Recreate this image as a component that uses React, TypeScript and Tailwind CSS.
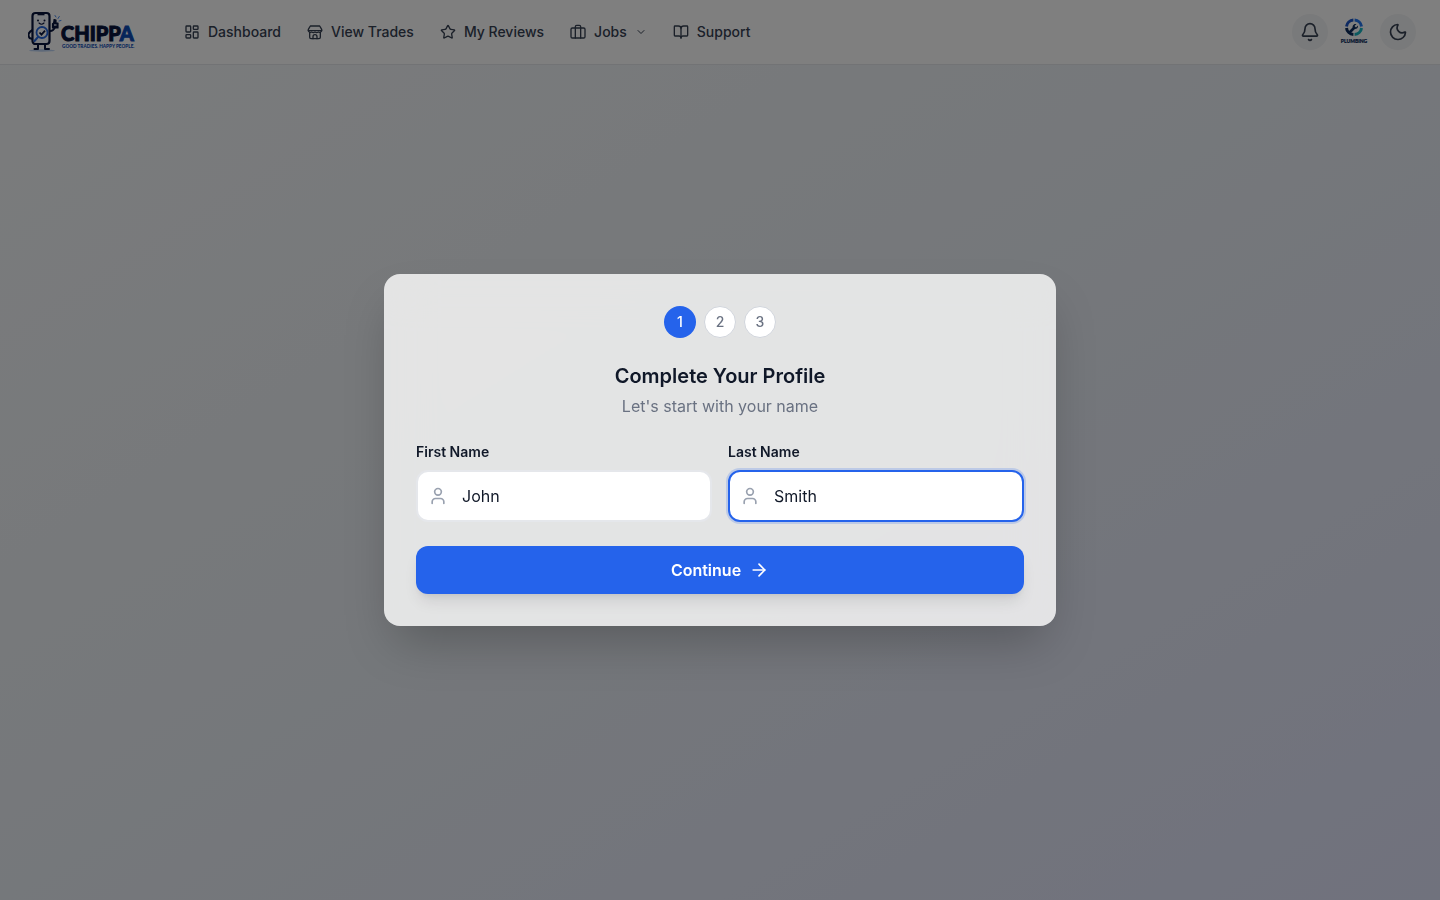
import React, { useState } from "react";
import {
  ArrowRight,
  Bell,
  BookOpen,
  ChevronDown,
  LayoutDashboard,
  Moon,
  Star,
  User,
} from "lucide-react";

type IconProps = { size?: number };

const StoreIcon: React.FC<IconProps> = ({ size = 16 }) => (
  <svg width={size} height={size} viewBox="0 0 24 24" fill="none" stroke="currentColor" strokeWidth="2" strokeLinecap="round" strokeLinejoin="round">
    <path d="M5 3h14l3 5v2H2V8z" />
    <path d="M2 10a3.300 3.300 0 0 0 5 2 4 4 0 0 0 5 0 4 4 0 0 0 5 0 3.300 3.300 0 0 0 5-2" />
    <path d="M4 12.500V20a2 2 0 0 0 2 2h12a2 2 0 0 0 2-2v-7.500" />
    <path d="M9 22v-3a3 3 0 0 1 6 0v3" />
  </svg>
);

const SuitcaseIcon: React.FC<IconProps> = ({ size = 16 }) => (
  <svg width={size} height={size} viewBox="0 0 24 24" fill="none" stroke="currentColor" strokeWidth="2" strokeLinecap="round" strokeLinejoin="round">
    <rect x="1.500" y="6" width="21" height="15" rx="2" />
    <path d="M8 21V4a2 2 0 0 1 2-2h4a2 2 0 0 1 2 2v17" />
  </svg>
);

const navItems = [
  { label: "Dashboard", icon: LayoutDashboard },
  { label: "View Trades", icon: StoreIcon },
  { label: "My Reviews", icon: Star },
  { label: "Jobs", icon: SuitcaseIcon, menu: true },
  { label: "Support", icon: BookOpen },
];

const steps = [1, 2, 3];

const Logo: React.FC = () => (
  <svg width="112" height="44" viewBox="0 0 112 44" role="img" aria-label="Chippa">
    {/* Ground shadow */}
    <ellipse cx="14" cy="40.5" rx="13" ry="1.2" fill="#8fb4ea" opacity="0.6" />
    {/* Legs and arms */}
    <g fill="none" stroke="#08153c" strokeWidth="2" strokeLinecap="round" strokeLinejoin="round">
      <path d="M10 34v5H6.500M17 34v5h4" />
      <path d="M4.500 20c-4 2-5 5-3 8l3 1M22 21c3 0 4-1 5-4" />
    </g>
    <rect x="4.500" y="3" width="17" height="31" rx="3" fill="#f5f8ff" stroke="#08153c" strokeWidth="2.200" />
    <path d="M9.500 3.500h7v1.800h-7z" fill="#08153c" />
    {/* Face */}
    <circle cx="10" cy="10.500" r="1" fill="#08153c" />
    <circle cx="16.500" cy="10.500" r="1" fill="#08153c" />
    <path d="M11 13q2.500 2.500 5 0" fill="none" stroke="#08153c" strokeWidth="1.100" strokeLinecap="round" />
    {/* Magnifier */}
    <circle cx="14" cy="22.500" r="5.500" fill="#fff" stroke="#2467dc" strokeWidth="1.800" />
    <path d="m11.500 22.500 2 2.200 3.500-4" fill="none" stroke="#08153c" strokeWidth="1.800" />
    <path d="m10 27-3.500 4" stroke="#2467dc" strokeWidth="2" strokeLinecap="round" />
    {/* Thumb */}
    <path d="M24.500 13.500c1.500 0 1.500-2.500 1.500-4l2 .5v3h2v5h-5.500z" fill="#08153c" stroke="#08153c" strokeWidth="1.200" strokeLinejoin="round" />
    <path d="M26 15h2.500" stroke="#f5f8ff" strokeWidth="1.200" />
    <path d="m28 7-1-1.500M30 8.500l1.300-2M31 11l2-.5" stroke="#3d82ec" strokeWidth="1" strokeLinecap="round" />
    <text x="33" y="31" fontFamily="Lato, sans-serif" fontWeight="900" fontSize="20" fill="#08153c" stroke="#08153c" strokeWidth="1">
      CHIPP<tspan fill="#0d4bb5" stroke="#0d4bb5">A</tspan>
    </text>
    <text x="34" y="38" fontFamily="Lato, sans-serif" fontWeight="900" fontSize="4.700" fill="#0d4bb5">
      GOOD TRADIES. HAPPY PEOPLE.
    </text>
  </svg>
);

const PlumbingAvatar: React.FC = () => (
  <svg width="32" height="32" viewBox="0 0 32 32" role="img" aria-label="Plumbing">
    <circle cx="16" cy="16" r="16" fill="#fff" />
    <g fill="none" strokeWidth="3">
      <path d="M8.500 10.500A7.300 7.300 0 0 1 15.400 4" stroke="#1d55c4" />
      <path d="M16.600 4A7.300 7.300 0 0 1 23.500 10.500" stroke="#2276f0" />
      <path d="M23.500 12A7.300 7.300 0 0 1 16.600 18.500" stroke="#18b5c0" />
      <path d="M15.400 18.500A7.300 7.300 0 0 1 8.500 12" stroke="#0c2c5c" />
    </g>
    <path d="m11.500 16.500 4.500-4.500" stroke="#0c2c5c" strokeWidth="2.600" />
    <path d="M20 9.500l-2 2-1.500-1.500 2-2c-2.500-.6-4.500 1.500-3.700 3.700.8 2.500 5.900 1.500 5.200-2.200z" fill="#0c2c5c" />
    <text x="16" y="27" textAnchor="middle" fontFamily="Lato, sans-serif" fontWeight="900" fontSize="5" fill="#0c2c5c" stroke="#0c2c5c" strokeWidth="0.200">
      PLUMBING
    </text>
  </svg>
);

const NameField: React.FC<{
  id: string;
  label: string;
  value: string;
  active: boolean;
  onFocus: () => void;
  onChange: (value: string) => void;
}> = ({ id, label, value, active, onFocus, onChange }) => (
  <div>
    <label htmlFor={id} className="block text-sm font-semibold text-gray-900 mb-2">
      {label}
    </label>
    <div className="relative">
      <User size={20} className="absolute left-3 top-4 text-gray-400" />
      <input
        id={id}
        type="text"
        value={value}
        onFocus={onFocus}
        onChange={(e) => onChange(e.target.value)}
        className={`block w-full h-[52px] rounded-xl border-2 bg-white pl-11 pr-4 text-base text-gray-900 outline-none ${
          active ? "border-[#2563eb] ring-2 ring-[#2563eb]/20" : "border-gray-200"
        }`}
      />
    </div>
  </div>
);

const App: React.FC = () => {
  const [firstName, setFirstName] = useState("John");
  const [lastName, setLastName] = useState("Smith");
  const [field, setField] = useState("last");

  return (
    <div className="min-h-screen bg-linear-to-br from-[#f6f8f9] via-[#ebf0f6] to-[#e1e4fb] font-['Inter',sans-serif]">
      {/* Header */}
      <header className="h-[65px] bg-white border-b border-gray-200 pl-7 pr-6 flex items-center justify-between">
        <div className="flex items-center gap-11">
          <a href="#" className="shrink-0">
            <Logo />
          </a>
          <nav className="flex items-center gap-[26px]">
            {navItems.map(({ label, icon: Icon, menu }) => (
              <a key={label} href="#" className="flex items-center gap-2 text-sm font-medium text-gray-700">
                <Icon size={16} />
                {label}
                {menu && <ChevronDown size={12} />}
              </a>
            ))}
          </nav>
        </div>
        <div className="flex items-center gap-2">
          <button aria-label="Notifications" className="w-9 h-9 rounded-full bg-gray-100 flex items-center justify-center text-gray-700">
            <Bell size={20} />
          </button>
          <button aria-label="Account" className="w-9 h-9 flex items-center justify-center">
            <PlumbingAvatar />
          </button>
          <button aria-label="Dark mode" className="w-9 h-9 rounded-full bg-gray-100 flex items-center justify-center text-gray-700">
            <Moon size={20} />
          </button>
        </div>
      </header>

      {/* Profile dialog */}
      <div className="fixed inset-0 z-50 flex items-center justify-center bg-black/50 p-4">
        <div role="dialog" aria-labelledby="profile-title" className="w-full max-w-2xl rounded-2xl bg-white/80 backdrop-blur-xl p-8 shadow-2xl">
          <div className="flex justify-center gap-2 mb-6">
            {steps.map((step) => (
              <div
                key={step}
                className={`w-8 h-8 rounded-full flex items-center justify-center text-sm font-medium ${
                  step === 1 ? "bg-[#2563eb] text-white" : "bg-white border border-gray-300 text-gray-500"
                }`}
              >
                {step}
              </div>
            ))}
          </div>
          <div className="text-center mb-6">
            <h2 id="profile-title" className="text-xl font-semibold text-gray-900 mb-1">
              Complete Your Profile
            </h2>
            <p className="text-base text-gray-500">Let's start with your name</p>
          </div>
          <form onSubmit={(e) => e.preventDefault()}>
            <div className="grid grid-cols-2 gap-4 mb-6">
              <NameField id="first-name" label="First Name" value={firstName} active={field === "first"} onFocus={() => setField("first")} onChange={setFirstName} />
              <NameField id="last-name" label="Last Name" value={lastName} active={field === "last"} onFocus={() => setField("last")} onChange={setLastName} />
            </div>
            <button type="submit" className="w-full h-12 rounded-xl bg-[#2563eb] text-white font-semibold shadow-lg flex items-center justify-center gap-2">
              Continue
              <ArrowRight size={20} />
            </button>
          </form>
        </div>
      </div>
    </div>
  );
};

export default App;
